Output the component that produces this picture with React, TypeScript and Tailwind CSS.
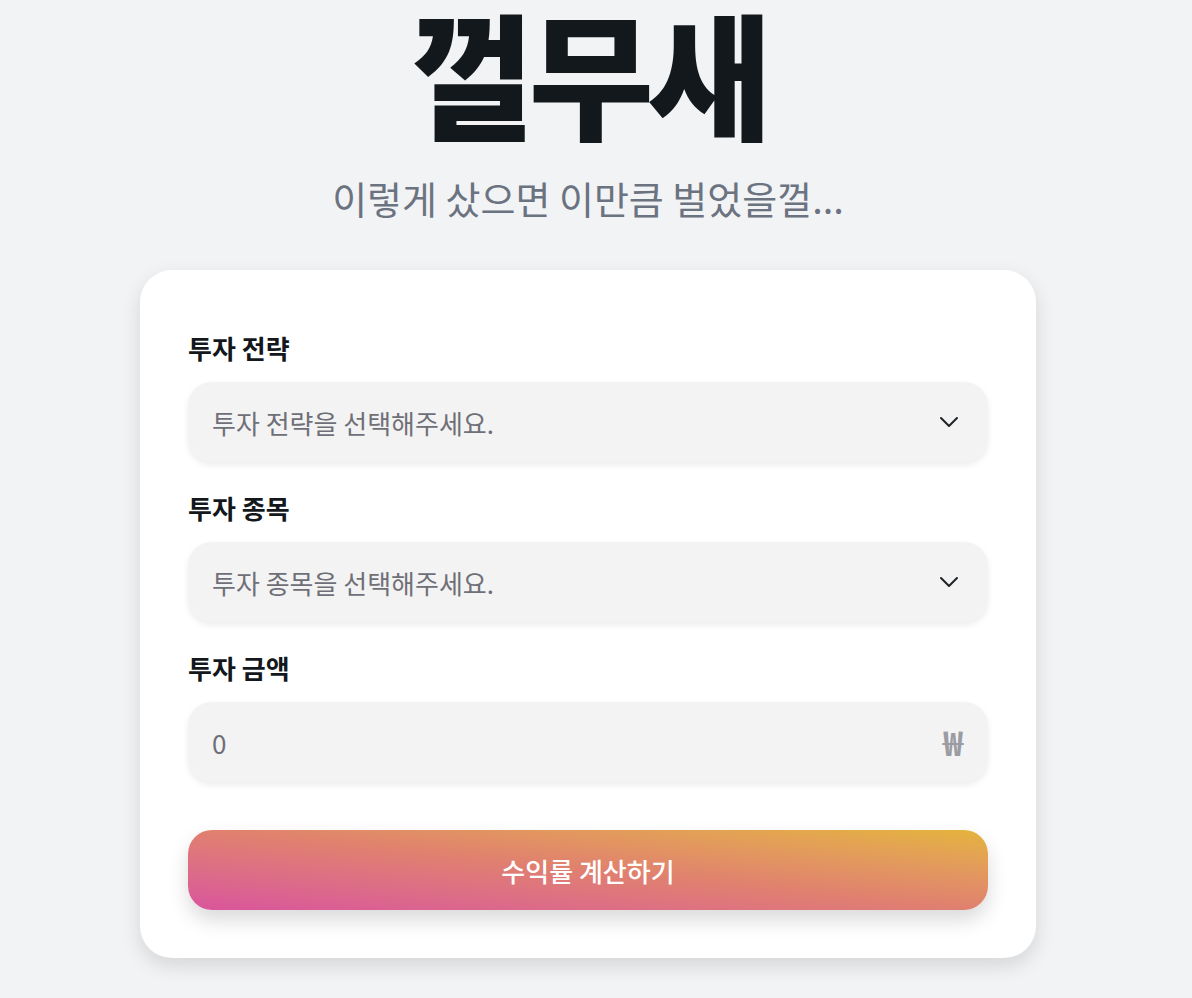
import React from "react";

function Chevron() {
  return (
    <svg width="20" height="12" viewBox="0 0 20 12" fill="none" stroke="#1f2328" strokeWidth="2" strokeLinecap="round" strokeLinejoin="round">
      <path d="M2 2l8 8 8-8" />
    </svg>
  );
}

function SelectField({ label, placeholder }: { label: string; placeholder: string }) {
  return (
    <div className="flex flex-col gap-[18px]">
      <div className="text-[26px] leading-[32px] font-bold text-[#14181c]">{label}</div>
      <div className="h-[80px] rounded-[24px] bg-[#f3f3f4] shadow-[0_3px_6px_rgba(0,0,0,0.08)] flex items-center justify-between pl-6 pr-[29px]">
        <span className="text-[26px] text-[#6f6f77]">{placeholder}</span>
        <Chevron />
      </div>
    </div>
  );
}

export default function App() {
  return (
    <div
      className="min-h-[998px] bg-[#f2f3f5] flex flex-col items-center pr-4"
      style={{ fontFamily: '"Noto Sans CJK KR", "Noto Sans", sans-serif' }}
    >
      <h1 className="text-[136px] leading-[142px] font-extrabold tracking-[-0.05em] text-[#13181c]">껄무새</h1>
      <p className="text-[38px] leading-[48px] text-[#6b7280] mt-[32px]">이렇게 샀으면 이만큼 벌었을껄...</p>
      <div className="mt-[48px] w-[896px] bg-white rounded-[32px] shadow-[0_8px_20px_rgba(0,0,0,0.12)] px-12 pt-[62px] pb-12">
        <div className="flex flex-col gap-[30px]">
          <SelectField label="투자 전략" placeholder="투자 전략을 선택해주세요." />
          <SelectField label="투자 종목" placeholder="투자 종목을 선택해주세요." />
          <div className="flex flex-col gap-[18px]">
            <div className="text-[26px] leading-[32px] font-bold text-[#14181c]">투자 금액</div>
            <div className="h-[80px] rounded-[24px] bg-[#f3f3f4] shadow-[0_3px_6px_rgba(0,0,0,0.08)] flex items-center justify-between pl-6 pr-[25px]">
              <span className="text-[26px] text-[#6f6f77]">0</span>
              <span className="text-[34px] leading-none font-bold text-[#9b9ba3]">₩</span>
            </div>
          </div>
        </div>
        <button className="mt-12 w-full h-[80px] rounded-[24px] bg-linear-to-tr from-[#d9549c] via-[#e0806f] to-[#e4b43b] shadow-[0_10px_20px_rgba(0,0,0,0.15)] text-white text-[26px] font-medium">
          수익률 계산하기
        </button>
      </div>
    </div>
  );
}
